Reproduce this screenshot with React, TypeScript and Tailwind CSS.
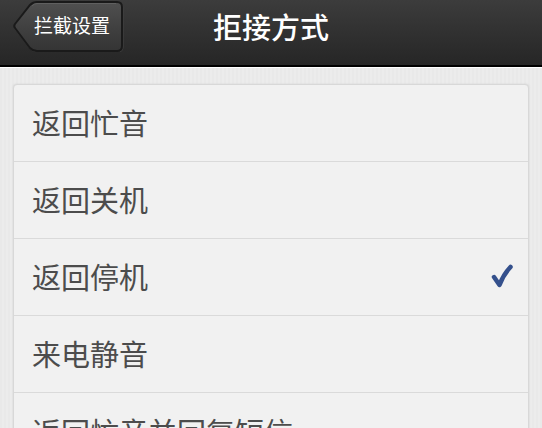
import { useState } from "react";

const options = [
  "返回忙音",
  "返回关机",
  "返回停机",
  "来电静音",
  "返回忙音并回复短信",
];

interface OptionRowProps {
  label: string;
  checked: boolean;
  onSelect: () => void;
}

function BackButton({ label }: { label: string }) {
  return (
    <button
      type="button"
      className="relative ml-3 h-[52px] w-[112px] pr-4 pb-0.5 pl-[22px] text-[19px] leading-6 text-white"
    >
      <svg
        viewBox="0 0 112 52"
        className="absolute inset-0 h-full w-full"
        aria-hidden="true"
      >
        <defs>
          <linearGradient id="back-fill" x1="0" y1="0" x2="0" y2="1">
            <stop offset="0" stopColor="#505050" />
            <stop offset="0.5" stopColor="#414141" />
            <stop offset="1" stopColor="#343434" />
          </linearGradient>
        </defs>
        <path
          d="M3 28Q1.5 26 3 24L18 5Q21 2 25 2H106Q111 2 111 7V46Q111 51 106 51H25Q21 51 18 48Z"
          fill="none"
          stroke="#444444"
          strokeWidth="1"
          transform="translate(0 1)"
        />
        <path
          d="M3 28Q1.5 26 3 24L18 5Q21 2 25 2H105Q110 2 110 7V46Q110 51 105 51H25Q21 51 18 48Z"
          fill="url(#back-fill)"
          stroke="#1a1a1a"
          strokeWidth="2"
        />
        <path d="M20 6Q22 3.5 25 3.5H104" fill="none" stroke="#606060" />
      </svg>
      <span className="relative whitespace-nowrap">{label}</span>
    </button>
  );
}

function OptionRow({ label, checked, onSelect }: OptionRowProps) {
  return (
    <label className="relative flex h-[77px] cursor-pointer items-center justify-between border-b border-[#dadada] pr-3.5 pb-0.5 pl-[18px] last:border-b-0">
      <span className="text-[29px] leading-10 text-[#4c4c4c]">{label}</span>
      <input
        type="radio"
        name="reject-mode"
        checked={checked}
        onChange={onSelect}
        className="absolute inset-0 cursor-pointer appearance-none"
      />
      {checked && (
        <svg
          viewBox="0 0 24 26"
          className="h-[26px] w-6 shrink-0"
          fill="none"
          stroke="#34508c"
          strokeWidth="4.500"
          strokeLinecap="round"
          strokeLinejoin="round"
          aria-hidden="true"
        >
          <path d="M4 14L9.500 22Q13 12 20.500 4" />
        </svg>
      )}
    </label>
  );
}

export default function App() {
  const [selected, setSelected] = useState(2);

  return (
    <div className="h-screen overflow-hidden bg-[#eaeaea] bg-[repeating-linear-gradient(90deg,#e9e9e9_0px,#e9e9e9_2px,#ececec_2px,#ececec_4px)] font-['Noto_Sans_CJK_SC',sans-serif]">
      {/* Title bar */}
      <header className="grid h-[67px] grid-cols-[1fr_auto_1fr] items-start border-b-2 border-black bg-linear-to-b from-[#3c3c3c] to-[#262626]">
        <BackButton label="拦截设置" />
        <h1
          id="page-title"
          className="pt-1.5 text-[29px] leading-10 font-medium text-white"
        >
          拒接方式
        </h1>
      </header>

      {/* Options */}
      <main className="border-t border-white px-[13px] pt-4">
        <div
          role="radiogroup"
          aria-labelledby="page-title"
          className="rounded-[4px] border border-[#d8d8d8] bg-[#f1f1f1] shadow-[0_0_2px_#d0d0d0]"
        >
          {options.map((option, index) => (
            <OptionRow
              key={option}
              label={option}
              checked={index === selected}
              onSelect={() => setSelected(index)}
            />
          ))}
        </div>
      </main>
    </div>
  );
}
